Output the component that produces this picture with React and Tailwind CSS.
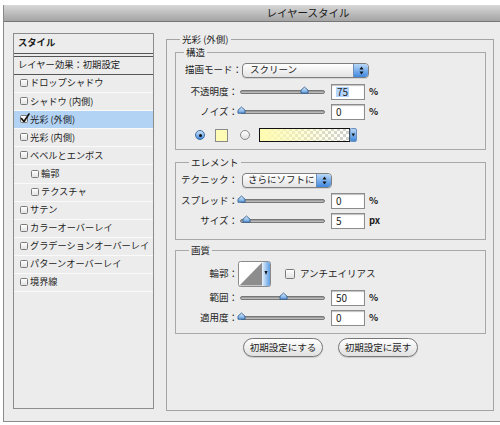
import React from "react";

const Thumb = () => (
  <svg width="9" height="8" viewBox="0 0 9 8">
    <defs>
      <linearGradient id="tg" x1="0" y1="0" x2="0" y2="1">
        <stop offset="0" stopColor="#e2effc" />
        <stop offset="1" stopColor="#5f9de0" />
      </linearGradient>
    </defs>
    <path d="M1 4.2 L4.5 1 L8 4.2 V7.2 H1 Z" fill="url(#tg)" stroke="#2f5d8f" strokeWidth="0.9" strokeLinejoin="round" />
  </svg>
);

function Slider({ pos }) {
  return (
    <div className="relative w-[89px] h-[12px] flex items-center">
      <div className="ml-[2px] w-[85px] h-[4px] rounded-full bg-gradient-to-b from-[#8e8e8e] to-[#c9c9c9] border border-[#777]" />
      <div className="absolute top-[0px] flex" style={{ left: pos - 4.5 }}>
        <Thumb />
      </div>
    </div>
  );
}

function NumInput({ value, selected }) {
  return (
    <div className="w-[34px] h-[16px] border border-[#8c8c8c] bg-white shadow-[inset_0_1px_1px_rgba(0,0,0,0.25)] flex items-center pl-[4px] text-[10px] leading-none">
      {selected ? <span className="bg-[#b4d5fe] px-[1px]">{value}</span> : <span>{value}</span>}
    </div>
  );
}

const Stepper = () => (
  <div className="w-[15px] h-full shrink-0 rounded-r-[3px] bg-gradient-to-b from-[#b9d8f7] to-[#3d87dd] border-l border-[#6b8fb8] flex items-center justify-center">
    <svg width="5" height="9" viewBox="0 0 5 9">
      <path d="M2.5 0.5 L4.5 3.5 H0.5 Z" fill="#111" />
      <path d="M2.5 8.5 L4.5 5.5 H0.5 Z" fill="#111" />
    </svg>
  </div>
);

function Select({ text, wide }) {
  return (
    <div
      className={
        (wide ? "w-[127px]" : "w-[90px]") +
        " h-[15px] rounded-[4px] border border-[#7f7f7f] bg-gradient-to-b from-white to-[#e4e4e4] flex items-center justify-between overflow-hidden shadow-[0_1px_0_rgba(0,0,0,0.1)]"
      }
    >
      <span className={(wide ? "pl-[7px]" : "pl-[5px]") + " text-[9.5px] leading-none whitespace-nowrap"}>{text}</span>
      <Stepper />
    </div>
  );
}

function SliderRow({ label, pos, value, unit, selected, labelW }) {
  return (
    <div className="h-[20px] flex items-center">
      <div className={(labelW || "w-[62px]") + " text-right text-[9.5px] leading-none whitespace-nowrap"}>{label}</div>
      <Slider pos={pos} />
      <div className="ml-[4px]">
        <NumInput value={value} selected={selected} />
      </div>
      <span className="ml-[4px] text-[9.5px] font-bold leading-none">{unit}</span>
    </div>
  );
}

const items = [
  { t: "ドロップシャドウ" },
  { t: "シャドウ (内側)" },
  { t: "光彩 (外側)", checked: true, sel: true },
  { t: "光彩 (内側)" },
  { t: "ベベルとエンボス" },
  { t: "輪郭", indent: true },
  { t: "テクスチャ", indent: true },
  { t: "サテン" },
  { t: "カラーオーバーレイ" },
  { t: "グラデーションオーバーレイ" },
  { t: "パターンオーバーレイ" },
  { t: "境界線" },
];

function Check({ checked }) {
  return (
    <div className="relative w-[8px] h-[8px] rounded-[1.5px] border border-[#7a7a7a] bg-gradient-to-b from-white to-[#e2e2e2] shrink-0">
      {checked && (
        <svg className="absolute left-[-1px] top-[-3px]" width="10" height="10" viewBox="0 0 10 10">
          <path d="M1.5 5.5 L4 8.5 L9 1" fill="none" stroke="#111" strokeWidth="1.6" strokeLinecap="round" strokeLinejoin="round" />
        </svg>
      )}
    </div>
  );
}

const Radio = ({ on }) =>
  on ? (
    <div className="w-[10px] h-[10px] rounded-full border border-[#3d6fa8] bg-gradient-to-b from-[#cfe3f8] to-[#3f87d8] flex items-center justify-center">
      <div className="w-[3px] h-[3px] rounded-full bg-[#111]" />
    </div>
  ) : (
    <div className="w-[10px] h-[10px] rounded-full border border-[#8a8a8a] bg-gradient-to-b from-white to-[#e0e0e0]" />
  );

const GradientPreview = () => (
  <svg width="98" height="14" viewBox="0 0 98 14">
    <defs>
      <pattern id="chk" width="6" height="6" patternUnits="userSpaceOnUse">
        <rect width="6" height="6" fill="#fff" />
        <rect width="3" height="3" fill="#cfcfcf" />
        <rect x="3" y="3" width="3" height="3" fill="#cfcfcf" />
      </pattern>
      <linearGradient id="yg" x1="0" y1="0" x2="1" y2="0">
        <stop offset="0" stopColor="#fffcb0" stopOpacity="1" />
        <stop offset="1" stopColor="#fffcb0" stopOpacity="0" />
      </linearGradient>
      <linearGradient id="bl" x1="0" y1="0" x2="0" y2="1">
        <stop offset="0" stopColor="#b9d8f7" />
        <stop offset="1" stopColor="#3d87dd" />
      </linearGradient>
    </defs>
    <rect x="0.5" y="0.5" width="90" height="13" fill="url(#chk)" />
    <rect x="0.5" y="0.5" width="90" height="13" fill="url(#yg)" />
    <rect x="0.5" y="0.5" width="90" height="13" fill="none" stroke="#111" />
    <rect x="91" y="0.5" width="6.5" height="13" rx="1.5" fill="url(#bl)" stroke="#6b8fb8" />
    <path d="M92.6 5.5 H96 L94.3 8.5 Z" fill="#111" />
  </svg>
);

const ContourPreview = () => (
  <svg width="33" height="26" viewBox="0 0 33 26">
    <defs>
      <linearGradient id="bl2" x1="0" y1="0" x2="1" y2="0">
        <stop offset="0" stopColor="#e6f1fc" />
        <stop offset="1" stopColor="#5d9de2" />
      </linearGradient>
    </defs>
    <rect x="0.5" y="0.5" width="32" height="25" rx="2" fill="#fff" stroke="#8a8a8a" />
    <path d="M1.5 24.5 L24 1.5 V24.5 Z" fill="#8d8d8d" />
    <rect x="24" y="1" width="8" height="24" rx="1.5" fill="url(#bl2)" />
    <path d="M26.5 10 H29.5 L28 14 Z" fill="#111" />
  </svg>
);

export default function App() {
  return (
    <div className="w-[500px] h-[425px] bg-white overflow-hidden pt-[5px] pl-[3px] font-['Noto_Sans_CJK_JP','Noto_Sans',sans-serif] text-[#1c1c1c]">
      <div className="w-[497px] h-[417px] bg-[#ececec] border-l border-b border-[#8a8a8a] flex flex-col">
        <div className="h-[17px] shrink-0 border-b border-[#777] bg-gradient-to-b from-[#d8d8d8] to-[#a4a4a4] flex items-center justify-center pl-[112px]">
          <span className="text-[10.5px] leading-none text-[#1a1a1a]">レイヤースタイル</span>
        </div>
        <div className="flex pt-[11px] pl-[9px] gap-[12px]">
          {/* Left list */}
          <div className="w-[141px] h-[376px] border border-[#8c8c8c] bg-[#ececec] flex flex-col">
            <div className="h-[20px] border-b border-[#555] flex items-center pl-[4px] pb-[1px] text-[9.3px] font-semibold leading-none">スタイル</div>
            <div className="h-[19px] mt-[2px] border-t border-b border-[#555] flex items-center pl-[4px] pb-[1px] text-[9.3px] leading-none">
              レイヤー効果：初期設定
            </div>
            {items.map((it, i) => (
              <div
                key={i}
                className={
                  "h-[18.1px] border-b border-[#fafafa] flex items-center gap-[2px] pb-[1px] text-[9.2px] leading-none " +
                  (it.indent ? "pl-[17px] " : "pl-[6px] ") +
                  (it.sel ? "bg-[#b3d3f5]" : "")
                }
              >
                <Check checked={it.checked} />
                <span>{it.t}</span>
              </div>
            ))}
          </div>

          {/* Right settings */}
          <fieldset className="w-[328px] h-[378px] border border-[#a3a3a3] pl-[8px] pr-[7px]">
            <legend className="ml-[5px] px-[2px] text-[9.5px] leading-[12px]">光彩 (外側)</legend>

            <fieldset className="w-[311px] mt-[1px] border border-[#a8a8a8] pt-[4px] pb-[6px]">
              <legend className="ml-[8px] px-[2px] text-[9.5px] leading-[12px]">構造</legend>
              <div className="h-[16px] flex items-center">
                <div className="w-[66px] text-right text-[9.5px] leading-none whitespace-nowrap">描画モード：</div>
                <Select text="スクリーン" wide />
              </div>
              <div className="mt-[4px]">
                <SliderRow label="不透明度：" pos={66} value="75" unit="%" selected />
              </div>
              <SliderRow label="ノイズ：" pos={3} value="0" unit="%" />
              <div className="h-[16px] mt-[5px] flex items-center">
                <div className="ml-[19px]">
                  <Radio on />
                </div>
                <div className="ml-[10px] w-[13px] h-[13px] border border-[#8a8a8a] bg-[#fdfbb4]" />
                <div className="ml-[12px]">
                  <Radio />
                </div>
                <div className="ml-[9px] flex">
                  <GradientPreview />
                </div>
              </div>
            </fieldset>

            <fieldset className="w-[311px] mt-[6px] border border-[#a8a8a8] pt-[4px] pb-[8px]">
              <legend className="ml-[13px] px-[2px] text-[9.5px] leading-[12px]">エレメント</legend>
              <div className="h-[16px] flex items-center">
                <div className="w-[62px] text-right text-[9.5px] leading-none whitespace-nowrap">テクニック：</div>
                <div className="ml-[4px]">
                  <Select text="さらにソフトに" />
                </div>
              </div>
              <div className="mt-[3px]">
                <SliderRow label="スプレッド：" pos={3} value="0" unit="%" />
              </div>
              <SliderRow label="サイズ：" pos={8} value="5" unit="px" />
            </fieldset>

            <fieldset className="w-[311px] mt-[4px] border border-[#a8a8a8] pt-[5px] pb-[5px]">
              <legend className="ml-[13px] px-[2px] text-[9.5px] leading-[12px]">画質</legend>
              <div className="h-[26px] flex items-center">
                <div className="w-[62px] text-right text-[9.5px] leading-none">輪郭：</div>
                <div className="flex">
                  <ContourPreview />
                </div>
                <div className="ml-[14px]">
                  <div className="w-[10px] h-[10px] rounded-[1.5px] border border-[#7a7a7a] bg-gradient-to-b from-white to-[#e2e2e2]" />
                </div>
                <span className="ml-[5px] text-[9.5px] leading-none">アンチエイリアス</span>
              </div>
              <div className="mt-[1px]">
                <SliderRow label="範囲：" pos={45} value="50" unit="%" />
              </div>
              <SliderRow label="適用度：" pos={3} value="0" unit="%" />
            </fieldset>

            <div className="mt-[4px] flex justify-center gap-[15px]">
              <div className="w-[80px] h-[19px] rounded-full border border-[#777] bg-gradient-to-b from-white to-[#e0e0e0] flex items-center justify-center text-[9.5px] leading-none shadow-[0_1px_1px_rgba(0,0,0,0.15)]">
                初期設定にする
              </div>
              <div className="w-[80px] h-[19px] rounded-full border border-[#777] bg-gradient-to-b from-white to-[#e0e0e0] flex items-center justify-center text-[9.5px] leading-none shadow-[0_1px_1px_rgba(0,0,0,0.15)]">
                初期設定に戻す
              </div>
            </div>
          </fieldset>
        </div>
      </div>
    </div>
  );
}
